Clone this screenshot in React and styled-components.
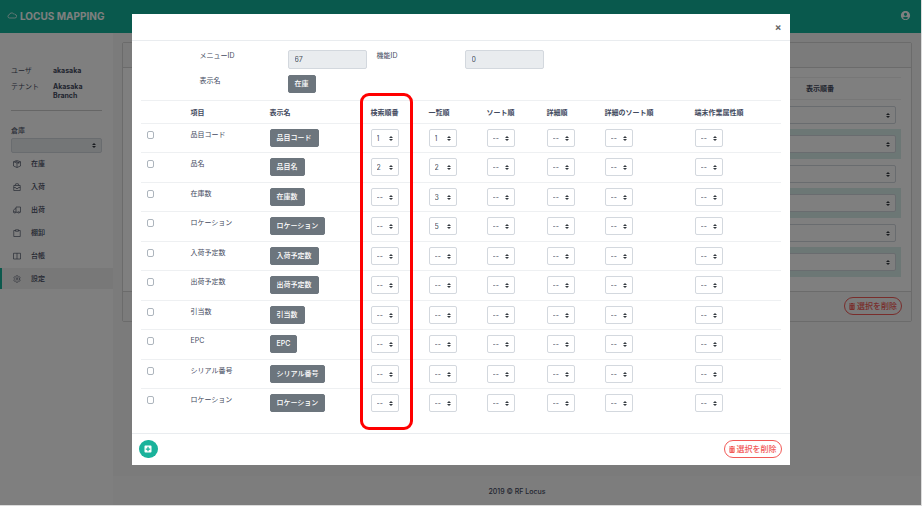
import React from "react";
import styled, { createGlobalStyle, css } from "styled-components";
import { MdAccountCircle } from "react-icons/md";
import { FaTrashAlt, FaPlusSquare } from "react-icons/fa";
import { IoSettingsOutline } from "react-icons/io5";

const GlobalStyle = createGlobalStyle`
  *, *::before, *::after {
    box-sizing: border-box;
  }

  html {
    background: #dcdcdc;
  }

  body {
    margin: 0;
    color: #434a5e;
    font-family: Inter, "Noto Sans CJK JP", sans-serif;
    font-size: 7px;
    line-height: 9px;
  }

  button, input, select {
    margin: 0;
    color: inherit;
    font: inherit;
  }
`;

const Page = styled.div`
  display: flex;
  flex-direction: column;
  min-height: calc(100vh - 1px);
  margin-right: 1px;
  background: #f6f6f6;
`;

const Header = styled.header`
  display: flex;
  align-items: center;
  justify-content: space-between;
  height: 33px;
  padding: 0 10px 2px 7px;
  background: #12b39b;
  color: #fff;
`;

const Brand = styled.a`
  display: flex;
  align-items: center;
  gap: 3px;
  color: #fff;
  font-size: 10px;
  font-weight: 700;
  line-height: 12px;
  text-decoration: none;
`;

const AccountButton = styled.button`
  display: flex;
  padding: 0;
  border: 0;
  background: none;
  font-size: 11px;
`;

const Body = styled.div`
  display: flex;
  flex: 1;
`;

const Sidebar = styled.aside`
  width: 113px;
  flex: none;
  padding-top: 33px;
  background: #fff;
`;

const UserInfo = styled.dl`
  display: grid;
  grid-template-columns: 42px 1fr;
  row-gap: 7px;
  margin: 0 11px;
  padding-bottom: 10px;
  border-bottom: 1px solid #ccc;

  dt,
  dd {
    margin: 0;
  }

  dd {
    font-weight: 700;
  }
`;

const Warehouse = styled.div`
  display: flex;
  flex-direction: column;
  gap: 3px;
  margin: 15px 11px 0;
`;

const arrows = css`
  appearance: none;
  background-image: url("data:image/svg+xml,%3Csvg xmlns='http://www.w3.org/2000/svg' viewBox='0 0 4 5'%3E%3Cpath fill='%23343a40' d='M2 0L0 2h4zm0 5L0 3h4z'/%3E%3C/svg%3E");
  background-repeat: no-repeat;
  background-size: 4px 5px;
  background-position: right 5px center;
`;

const Select = styled.select`
  ${arrows}
  display: block;
  width: ${props => (props.$wide ? "100%" : "28px")};
  height: ${props => (props.$short ? "15px" : "18px")};
  padding: 0 5px;
  border: 1px solid #d3d8de;
  border-radius: 2px;
  background-color: ${props => (props.disabled ? "#e9ecef" : "#fff")};
  color: #495057;
  opacity: 1;
`;

const Menu = styled.nav`
  display: flex;
  flex-direction: column;
  gap: 2px;
`;

const MenuItem = styled.a`
  display: flex;
  align-items: center;
  gap: 10px;
  height: 21px;
  padding-left: 11px;
  border-left: 2px solid ${props => (props.$active ? "#18b29b" : "transparent")};
  background: ${props => (props.$active ? "#f0f0f0" : "none")};
  color: inherit;
  font-weight: 500;
  text-decoration: none;
`;

const Main = styled.main`
  display: flex;
  flex: 1;
  flex-direction: column;
`;

const Card = styled.section`
  margin: 9px 9px 0;
  border: 1px solid #d6d6d6;
  border-radius: 2px;
  background: #fff;
`;

const CardHeader = styled.div`
  height: 25px;
  border-bottom: 1px solid #d6d6d6;
  background: #f6f6f6;
`;

const CardBody = styled.div`
  padding: 9px 10px 14px;
`;

const CardFooter = styled.div`
  display: flex;
  justify-content: flex-end;
  padding: 5px 9px 6px;
  border-top: 1px solid #d6d6d6;
  background: #f6f6f6;
`;

const OrderTable = styled.table`
  width: 100%;
  border-collapse: collapse;
  table-layout: fixed;

  th {
    width: 162px;
    height: 22px;
    padding: 0;
    border-top: 1px solid #eee;
    border-bottom: 1px solid #eee;
  }

  th:first-child {
    width: auto;
  }

  td {
    padding: 6px 5px 5px;
  }

  tbody tr:nth-child(even) {
    background: #d9efea;

    td {
      padding-bottom: 6px;
    }
  }
`;

const DeleteButton = styled.button`
  display: flex;
  align-items: center;
  gap: 2px;
  height: 18px;
  padding: 0 4px;
  border: 1px solid #f25a57;
  border-radius: 9px;
  background: none;
  color: #f25a57;
  font-size: 8px;
  font-weight: 500;

  svg {
    width: 6px;
    height: 7px;
  }
`;

const Footer = styled.footer`
  margin-top: auto;
  padding: 11px 0 9px;
  background: #fbfbfb;
  font-weight: 500;
  text-align: center;
`;

const Backdrop = styled.div`
  position: fixed;
  inset: 0 1px 1px 0;
  overflow: hidden;
  background: rgba(0, 0, 0, 0.5);
`;

const Modal = styled.div`
  max-width: 658px;
  margin: 14px auto;
  background: #fff;
`;

const ModalHeader = styled.div`
  display: flex;
  align-items: center;
  justify-content: flex-end;
  height: 27px;
  padding-right: 8px;
  border-bottom: 1px solid #e9ecef;
`;

const CloseButton = styled.button`
  padding: 0;
  border: 0;
  background: none;
  color: #666;
  font-size: 10px;
  font-weight: 700;
  line-height: 11px;
`;

const ModalBody = styled.div`
  padding: 9px 9px 15px;
`;

const MenuForm = styled.div`
  display: grid;
  grid-template-columns: 88px 79px 98px 79px;
  row-gap: 6px;
  align-items: start;
  padding: 0 0 7px 59px;

  label,
  span {
    padding-top: 1px;
  }

  label:nth-of-type(2) {
    margin-left: 10px;
  }
`;

const ReadOnlyInput = styled.input`
  width: 100%;
  height: 19px;
  padding: 0 6px;
  border: 1px solid #d3d8de;
  border-radius: 2px;
  background: #e9ecef;
  color: #495057;
`;

const NameButton = styled.button`
  display: block;
  justify-self: start;
  height: 18px;
  padding: 0 6px 1px;
  border: 1px solid #6c757d;
  border-radius: 2px;
  background: #6c757d;
  color: #fff;
  font-weight: 500;
  white-space: nowrap;
`;

const TableWrap = styled.div`
  position: relative;
`;

const FieldTable = styled.table`
  width: 100%;
  border-collapse: collapse;
  table-layout: fixed;

  th {
    height: 23px;
    padding: 0 5px;
    border-top: 1px solid #eef0f2;
    font-weight: 700;
    text-align: left;
    white-space: nowrap;
  }

  td {
    padding: 5px;
    border-top: 1px solid #eef0f2;
    vertical-align: top;
  }

  tbody tr:nth-child(even) td {
    padding-bottom: 6px;
  }
`;

const FieldName = styled.span`
  display: block;
  padding-top: 1px;
`;

const Checkbox = styled.input`
  display: block;
  appearance: none;
  width: 7px;
  height: 8px;
  margin: 2px 1px;
  border: 1px solid #adb5bd;
  border-radius: 2px;
  background: #fff;
`;

const Highlight = styled.div`
  position: absolute;
  top: -7px;
  bottom: -12px;
  left: 219px;
  width: 53px;
  border: 3px solid #f00;
  border-radius: 9px;
  pointer-events: none;
`;

const ModalFooter = styled.div`
  display: flex;
  align-items: center;
  justify-content: space-between;
  padding: 6px 8px 7px 7px;
  border-top: 1px solid #e9ecef;
`;

const AddButton = styled.button`
  display: flex;
  align-items: center;
  justify-content: center;
  width: 19px;
  height: 18px;
  padding: 0;
  border: 0;
  border-radius: 9px;
  background: #1ab29b;
  color: #fff;
  font-size: 8px;
`;

const Icon = ({ children }) => (
  <svg
    width="8"
    height="8"
    viewBox="0 0 16 16"
    fill="none"
    stroke="currentColor"
    strokeWidth="1.3"
    aria-hidden="true"
  >
    {children}
  </svg>
);

const menuItems = [
  {
    label: "在庫",
    icon: (
      <Icon>
        <path d="M1 3.500l7-2.500 7 2.500v8.500l-7 3-7-3zM1 3.500L8 6l7-2.500M8 6v9M4.500 2.300l7 2.500v3" />
      </Icon>
    )
  },
  {
    label: "入荷",
    icon: (
      <Icon>
        <path d="M1.500 5h13v10h-13zM4 5l1.500-3.500h5L12 5M1.500 9h3.500l1 2h4l1-2h3.500" />
      </Icon>
    )
  },
  {
    label: "出荷",
    icon: (
      <Icon>
        <path d="M6 12.500V2h9v10.500h-2M10 12.500H5.500M6 5.500H3.500L1 9v3.500h1" />
        <circle cx="3.700" cy="12.800" r="1.500" />
        <circle cx="11.500" cy="12.800" r="1.500" />
      </Icon>
    )
  },
  {
    label: "棚卸",
    icon: (
      <Icon>
        <path d="M5 3H1.500v12h13V3H11M5 1.500h6v3H5z" />
      </Icon>
    )
  },
  {
    label: "台帳",
    icon: (
      <Icon>
        <path d="M1 2.500h14v11.500H1zM8 2.500V14" />
      </Icon>
    )
  },
  { label: "設定", icon: <IoSettingsOutline size={8} /> }
];

const fields = [
  { name: "品目コード", display: "品目コード", search: "1", list: "1" },
  { name: "品名", display: "品目名", search: "2", list: "2" },
  { name: "在庫数", display: "在庫数", list: "3" },
  { name: "ロケーション", display: "ロケーション", list: "5" },
  { name: "入荷予定数", display: "入荷予定数" },
  { name: "出荷予定数", display: "出荷予定数" },
  { name: "引当数", display: "引当数" },
  { name: "EPC", display: "EPC" },
  { name: "シリアル番号", display: "シリアル番号" },
  { name: "ロケーション", display: "ロケーション" }
];

const orderColumns = [
  { key: "search", label: "検索順番" },
  { key: "list", label: "一覧順" },
  { key: "sort", label: "ソート順" },
  { key: "detail", label: "詳細順" },
  { key: "detailSort", label: "詳細のソート順" },
  { key: "terminal", label: "端末作業属性順" }
];

const columnWidths = [45, 79, 101, 58, 58, 60, 58, 90];

const OrderSelect = ({ value = "--", label }) => (
  <Select defaultValue={value} aria-label={label}>
    {["--", "1", "2", "3", "4", "5"].map(option => (
      <option key={option}>{option}</option>
    ))}
  </Select>
);

const DeleteSelected = () => (
  <DeleteButton type="button">
    <FaTrashAlt />
    選択を削除
  </DeleteButton>
);

const SideMenu = () => (
  <Sidebar>
    <UserInfo>
      <dt>ユーザ</dt>
      <dd>akasaka</dd>
      <dt>テナント</dt>
      <dd>Akasaka Branch</dd>
    </UserInfo>
    <Warehouse>
      <label htmlFor="warehouse">倉庫</label>
      <Select id="warehouse" $wide $short disabled />
    </Warehouse>
    <Menu>
      {menuItems.map(item => (
        <MenuItem key={item.label} href="#" $active={item.label === "設定"}>
          {item.icon}
          {item.label}
        </MenuItem>
      ))}
    </Menu>
  </Sidebar>
);

const MenuCard = () => (
  <Card>
    <CardHeader />
    <CardBody>
      <OrderTable>
        <thead>
          <tr>
            <th />
            <th>表示順番</th>
          </tr>
        </thead>
        <tbody>
          {[1, 2, 3, 4, 5, 6].map(row => (
            <tr key={row}>
              <td />
              <td>
                <Select $wide aria-label="表示順番" />
              </td>
            </tr>
          ))}
        </tbody>
      </OrderTable>
    </CardBody>
    <CardFooter>
      <DeleteSelected />
    </CardFooter>
  </Card>
);

const FieldModal = () => (
  <Modal role="dialog" aria-modal="true">
    <ModalHeader>
      <CloseButton type="button">×</CloseButton>
    </ModalHeader>
    <ModalBody>
      <MenuForm>
        <label htmlFor="menu-id">メニューID</label>
        <ReadOnlyInput id="menu-id" defaultValue="67" readOnly />
        <label htmlFor="function-id">機能ID</label>
        <ReadOnlyInput id="function-id" defaultValue="0" readOnly />
        <span>表示名</span>
        <NameButton type="button">在庫</NameButton>
      </MenuForm>
      <TableWrap>
        <FieldTable>
          <colgroup>
            {columnWidths.map((width, i) => (
              <col key={i} width={width} />
            ))}
            <col />
          </colgroup>
          <thead>
            <tr>
              <th />
              <th>項目</th>
              <th>表示名</th>
              {orderColumns.map(column => (
                <th key={column.key}>{column.label}</th>
              ))}
            </tr>
          </thead>
          <tbody>
            {fields.map((field, i) => (
              <tr key={i}>
                <td>
                  <Checkbox type="checkbox" aria-label={field.name} />
                </td>
                <td>
                  <FieldName>{field.name}</FieldName>
                </td>
                <td>
                  <NameButton type="button">{field.display}</NameButton>
                </td>
                {orderColumns.map(column => (
                  <td key={column.key}>
                    <OrderSelect value={field[column.key]} label={column.label} />
                  </td>
                ))}
              </tr>
            ))}
          </tbody>
        </FieldTable>
        <Highlight />
      </TableWrap>
    </ModalBody>
    <ModalFooter>
      <AddButton type="button" aria-label="追加">
        <FaPlusSquare />
      </AddButton>
      <DeleteSelected />
    </ModalFooter>
  </Modal>
);

const App = () => (
  <>
    <GlobalStyle />
    <Page>
      <Header>
        <Brand href="#">
          <svg width="10" height="7" viewBox="0 0 20 14" fill="none" stroke="currentColor" strokeWidth="1.500">
            <path d="M5 12h10.500a3.500 3.500 0 0 0 .5-7 3 3 0 0 0-3-1.500A5 5 0 0 0 4.500 5.500 3.300 3.300 0 0 0 5 12z" />
          </svg>
          LOCUS MAPPING
        </Brand>
        <AccountButton type="button" aria-label="アカウント">
          <MdAccountCircle />
        </AccountButton>
      </Header>
      <Body>
        <SideMenu />
        <Main>
          <MenuCard />
          <Footer>2019 © RF Locus</Footer>
        </Main>
      </Body>
    </Page>
    <Backdrop>
      <FieldModal />
    </Backdrop>
  </>
);

export default App;
